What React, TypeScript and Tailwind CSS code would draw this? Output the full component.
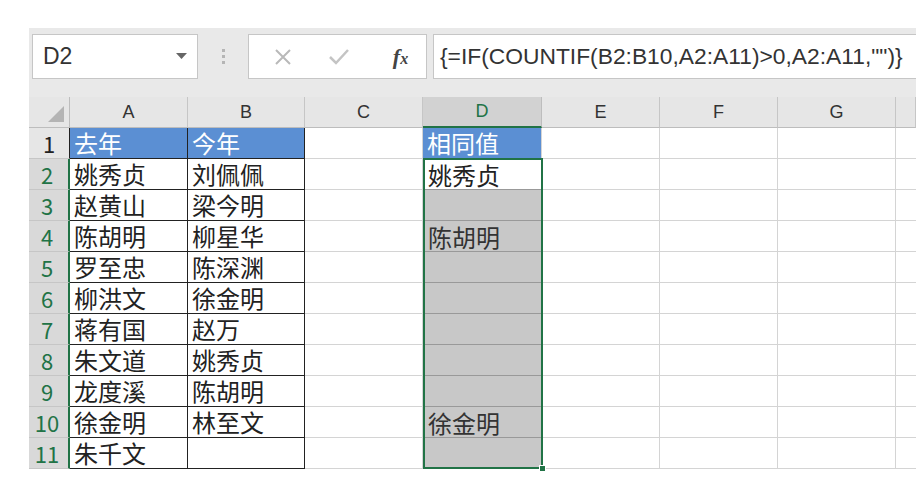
import React from 'react';

const colA = ['去年', '姚秀贞', '赵黄山', '陈胡明', '罗至忠', '柳洪文', '蒋有国', '朱文道', '龙度溪', '徐金明', '朱千文'];
const colB = ['今年', '刘佩佩', '梁今明', '柳星华', '陈深渊', '徐金明', '赵万', '姚秀贞', '陈胡明', '林至文', ''];
const colD = ['相同值', '姚秀贞', '', '陈胡明', '', '', '', '', '', '徐金明', ''];
const headers = ['A', 'B', 'C', 'D', 'E', 'F', 'G', ''];

const cjk = "font-['Noto_Sans_CJK_SC',sans-serif]";

function Toolbar() {
  return (
    <div className="flex items-start h-[69px] pt-[6px] bg-[#e9e9e9] font-['Liberation_Sans',sans-serif]">
      {/* Name box */}
      <div className="ml-[3px] w-[166px] h-[45px] bg-white border border-[#c6c6c6] flex items-center pl-[10px] pr-[10px]">
        <span className="text-[23px] text-[#333] flex-1 leading-none">D2</span>
        <svg width="11" height="7" viewBox="0 0 11 7">
          <polygon points="0,0 11,0 5.5,6" fill="#666" />
        </svg>
      </div>
      {/* dots */}
      <div className="w-[50px] h-[45px] flex flex-col items-center justify-center gap-[3px]">
        <span className="w-[3px] h-[3px] bg-[#b5b5b5]" />
        <span className="w-[3px] h-[3px] bg-[#b5b5b5]" />
        <span className="w-[3px] h-[3px] bg-[#b5b5b5]" />
      </div>
      {/* cancel / enter / fx */}
      <div className="w-[179px] h-[45px] bg-white border border-[#c6c6c6] flex items-center">
        <div className="w-[68px] flex justify-center">
          <svg width="18" height="18" viewBox="0 0 18 18">
            <path d="M2 2 L16 16 M16 2 L2 16" stroke="#b9b9b9" strokeWidth="2" fill="none" />
          </svg>
        </div>
        <div className="w-[44px] flex justify-center">
          <svg width="22" height="18" viewBox="0 0 22 18">
            <path d="M2 9 L8 15 L20 2" stroke="#c4c4c4" strokeWidth="2.5" fill="none" />
          </svg>
        </div>
        <div className="flex-1 flex justify-center pl-[14px]">
          <span className="font-['Liberation_Serif',serif] italic font-bold text-[22px] text-[#444] leading-none">
            f<span className="text-[16px]">x</span>
          </span>
        </div>
      </div>
      {/* formula */}
      <div className="ml-[6px] flex-1 h-[45px] bg-white border-y border-l border-[#c6c6c6] flex items-center pl-[6px] overflow-hidden whitespace-nowrap">
        <span className="text-[22.8px] text-[#333] leading-none">{'{=IF(COUNTIF(B2:B10,A2:A11)>0,A2:A11,"")}'}</span>
      </div>
    </div>
  );
}

function Grid() {
  const rows = Array.from({ length: 11 }, (_, i) => i);
  return (
    <div className="relative grid grid-cols-[41px_118px_117px_118px_119px_118px_118px_118px_1fr] auto-rows-[31px]">
      {/* header row */}
      <div className="relative bg-[#e6e6e6] border-r border-b border-[#bdbdbd]">
        <svg className="absolute right-[5px] bottom-[5px]" width="16" height="16" viewBox="0 0 16 16">
          <polygon points="16,0 16,16 0,16" fill="#b4b4b4" />
        </svg>
      </div>
      {headers.map((h) =>
        h === 'D' ? (
          <div key={h} className="bg-[#d2d2d2] border-r border-[#bdbdbd] border-b-2 border-b-[#217346] flex items-center justify-center text-[18px] text-[#217346] font-['Liberation_Sans',sans-serif]">
            {h}
          </div>
        ) : (
          <div key={h || 'H'} className="bg-[#e6e6e6] border-r border-b border-[#c6c6c6] border-b-[#bdbdbd] flex items-center justify-center text-[18px] text-[#333] font-['Liberation_Sans',sans-serif]">
            {h}
          </div>
        )
      )}

      {rows.map((r) => (
        <React.Fragment key={r}>
          {/* row header */}
          {r === 0 ? (
            <div className={`bg-[#e6e6e6] border-r border-b border-[#c6c6c6] border-r-[#222] flex items-center justify-center text-[22px] text-[#222] ${cjk}`}>
              {r + 1}
            </div>
          ) : (
            <div className={`bg-[#d9d9d9] border-r-2 border-r-[#217346] border-b border-b-[#c6c6c6] flex items-center justify-center pr-[3px] text-[22px] text-[#217346] ${cjk}`}>
              {r + 1}
            </div>
          )}
          {/* A */}
          <div className={`${r === 0 ? 'bg-[#5b8fd3] text-white' : 'bg-white text-[#222]'} border-r border-b border-[#222] flex items-center pl-[4px] text-[24px] leading-none ${cjk}`}>
            {colA[r]}
          </div>
          {/* B */}
          <div className={`${r === 0 ? 'bg-[#5b8fd3] text-white' : 'bg-white text-[#222]'} border-r border-b border-[#222] flex items-center pl-[4px] text-[24px] leading-none ${cjk}`}>
            {colB[r]}
          </div>
          {/* C */}
          <div className="bg-white border-r border-b border-[#d4d4d4]" />
          {/* D */}
          {r === 0 ? (
            <div className={`bg-[#5b8fd3] text-white border-r border-b border-[#d4d4d4] flex items-center pl-[4px] text-[24px] leading-none ${cjk}`}>
              {colD[r]}
            </div>
          ) : r === 1 ? (
            <div className={`bg-white text-[#222] shadow-[inset_0_-1px_0_#999999] flex items-center pl-[5px] text-[24px] leading-none ${cjk}`}>
              {colD[r]}
            </div>
          ) : (
            <div className={`bg-[#c8c8c8] text-[#333] shadow-[inset_0_-1px_0_#999999] flex items-center pl-[5px] text-[24px] leading-none ${cjk}`}>
              {colD[r]}
            </div>
          )}
          <div className="bg-white border-r border-b border-[#d4d4d4]" />
          <div className="bg-white border-r border-b border-[#d4d4d4]" />
          <div className="bg-white border-r border-b border-[#d4d4d4]" />
          <div className="bg-white border-b border-[#d4d4d4]" />
        </React.Fragment>
      ))}

      {/* selection D2:D11 */}
      <div className="absolute left-[394px] top-[61px] w-[120px] h-[311px] border-2 border-[#217346] pointer-events-none" />
      <div className="absolute left-[510px] top-[368px] w-[7px] h-[7px] bg-[#217346] border border-white" />
    </div>
  );
}

export default function App() {
  return (
    <div className="w-[916px] h-[484px] bg-white pl-[29px] pt-[28px] overflow-hidden">
      <Toolbar />
      <Grid />
    </div>
  );
}
